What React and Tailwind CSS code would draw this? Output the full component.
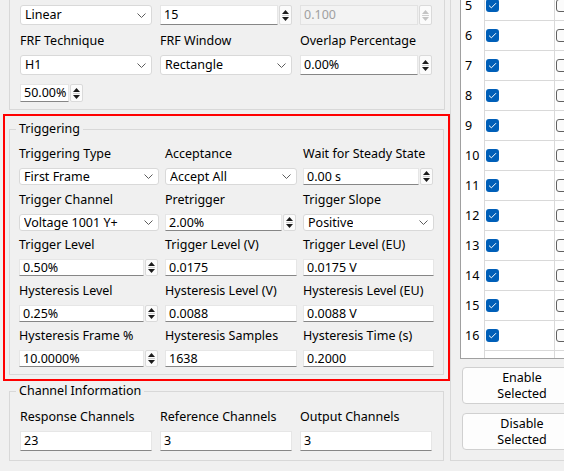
import React from 'react';

// small down chevron used by the combo boxes
const Chevron = () => (
  <svg width="9" height="5" viewBox="0 0 9 5" className="shrink-0">
    <path d="M0.5 0.5L4.5 4.5L8.5 0.5" fill="none" stroke="#5c5c5c" strokeWidth="1" />
  </svg>
);

const Combo = ({ value, className = 'h-[20px]' }) => (
  <div className={`${className} flex items-center justify-between bg-white border border-[#d9d9d9] rounded-[3px] pl-[4px] pr-[5px] overflow-hidden`}>
    <span className="truncate">{value}</span>
    <Chevron />
  </div>
);

const Field = ({ value, className = 'h-[20px]' }) => (
  <div className={`${className} flex items-center bg-white border border-[#e6e6e6] border-b-[#868686] pl-[3px] overflow-hidden whitespace-nowrap`}>
    {value}
  </div>
);

const DisabledField = ({ value, className = 'h-[20px]' }) => (
  <div className={`${className} flex items-center bg-[#f3f3f3] border border-[#e2e2e2] pl-[3px] text-[#a0a0a0] overflow-hidden whitespace-nowrap`}>
    {value}
  </div>
);

const Arrows = ({ disabled }) => {
  const c = disabled ? '#c4c4c4' : '#1b1b1b';
  return (
    <div className="w-[13px] shrink-0 flex flex-col items-center justify-center border border-[#dadada] rounded-[2px] bg-[#fbfbfb]">
      <svg width="7" height="4" viewBox="0 0 7 4">
        <path d="M0 4L3.5 0L7 4Z" fill={c} />
      </svg>
      <div className="w-[7px] h-px my-[1px] bg-[#cfcfcf]" />
      <svg width="7" height="4" viewBox="0 0 7 4">
        <path d="M0 0L3.5 4L7 0Z" fill={c} />
      </svg>
    </div>
  );
};

const Spin = ({ value, className = 'h-[20px]', disabled }) => (
  <div className={`${className} flex gap-[1px]`}>
    {disabled ? (
      <DisabledField value={value} className="flex-1 min-w-0" />
    ) : (
      <Field value={value} className="flex-1 min-w-0" />
    )}
    <Arrows disabled={disabled} />
  </div>
);

const Control = ({ item, className }) => {
  if (item.kind === 'combo') return <Combo value={item.value} className={className} />;
  if (item.kind === 'spin') return <Spin value={item.value} className={`${className} mr-[1px]`} />;
  return <Field value={item.value} className={className} />;
};

const triggerRows = [
  {
    h: 'h-[28px]',
    items: [
      { label: 'Triggering Type', kind: 'combo', value: 'First Frame' },
      { label: 'Acceptance', kind: 'combo', value: 'Accept All' },
      { label: 'Wait for Steady State', kind: 'spin', value: '0.00 s' },
    ],
  },
  {
    h: 'h-[29px]',
    items: [
      { label: 'Trigger Channel', kind: 'combo', value: 'Voltage 1001 Y+' },
      { label: 'Pretrigger', kind: 'spin', value: '2.00%' },
      { label: 'Trigger Slope', kind: 'combo', value: 'Positive' },
    ],
  },
  {
    h: 'h-[28px]',
    items: [
      { label: 'Trigger Level', kind: 'spin', value: '0.50%' },
      { label: 'Trigger Level (V)', kind: 'field', value: '0.0175' },
      { label: 'Trigger Level (EU)', kind: 'field', value: '0.0175 V' },
    ],
  },
  {
    h: 'h-[29px]',
    items: [
      { label: 'Hysteresis Level', kind: 'spin', value: '0.25%' },
      { label: 'Hysteresis Level (V)', kind: 'field', value: '0.0088' },
      { label: 'Hysteresis Level (EU)', kind: 'field', value: '0.0088 V' },
    ],
  },
  {
    h: 'h-[28px]',
    items: [
      { label: 'Hysteresis Frame %', kind: 'spin', value: '10.0000%' },
      { label: 'Hysteresis Samples', kind: 'field', value: '1638' },
      { label: 'Hysteresis Time (s)', kind: 'field', value: '0.2000' },
    ],
  },
];

// rows 5..16 are in view, 17 only peeks in under the last line
const channelRows = [5, 6, 7, 8, 9, 10, 11, 12, 13, 14, 15, 16, 17];

const CheckOn = () => (
  <div className="w-[13px] h-[13px] rounded-[3px] bg-[#005fb8] flex items-center justify-center">
    <svg width="9" height="7" viewBox="0 0 9 7">
      <path d="M1 3.6L3.4 5.8L8 1.2" fill="none" stroke="#ffffff" strokeWidth="1" />
    </svg>
  </div>
);

const CheckOff = () => (
  <div className="w-[13px] h-[13px] rounded-[3px] border border-[#616161] bg-[#fbfbfb]" />
);

export default function App() {
  return (
    <div className="w-[564px] h-[471px] overflow-hidden bg-[#f0f0f0] flex text-[12.5px] leading-[16px] text-black font-['Noto_Sans',sans-serif]">
      {/* settings column */}
      <div className="w-[450px] shrink-0 flex flex-col">
        {/* averaging / FRF group (top edge scrolled away) */}
        <div className="ml-[9px] w-[436px] border-x border-b border-[#d8d8d8] pl-[10px] pt-[5px] pb-[7px]">
          <div className="grid grid-cols-[132px_132px_132px] gap-x-[8px]">
            <Combo value="Linear" />
            <Spin value="15" />
            <Spin value="0.100" disabled />
            <div className="h-[30px] pt-[2px] flex items-center">FRF Technique</div>
            <div className="h-[30px] pt-[2px] flex items-center">FRF Window</div>
            <div className="h-[30px] pt-[2px] flex items-center">Overlap Percentage</div>
            <Combo value="H1" />
            <Combo value="Rectangle" />
            <Spin value="0.00%" />
          </div>
          <Spin value="50.00%" className="h-[18px] w-[63px] mt-[9px]" />
        </div>

        {/* highlighted triggering settings */}
        <div className="mt-[4px] ml-[3px] w-[447px] border-2 border-[#ff0000] pt-[5px] pl-[4px] pr-[4px] pb-[4px]">
          <fieldset className="w-[435px] border border-[#d8d8d8] pl-[9px] pt-[3px] pb-[7px]">
            <legend className="ml-[-3px] px-[3px]">Triggering</legend>
            {triggerRows.map((row, i) => (
              <div key={i} className="grid grid-cols-[140px_132px_131px] gap-x-[6px]">
                {row.items.map((item) => (
                  <div key={item.label} className={`${row.h} flex items-center whitespace-nowrap`}>
                    {item.label}
                  </div>
                ))}
                {row.items.map((item) => (
                  <Control key={item.label + '-c'} item={item} className="h-[17px]" />
                ))}
              </div>
            ))}
          </fieldset>
        </div>

        <fieldset className="mt-[2px] ml-[9px] w-[435px] border border-[#d8d8d8] pl-[10px] pt-[4px] pb-[9px]">
          <legend className="ml-[-4px] px-[3px]">Channel Information</legend>
          <div className="grid grid-cols-[132px_132px_132px] gap-x-[8px]">
            <div className="h-[28px] flex items-center">Response Channels</div>
            <div className="h-[28px] flex items-center">Reference Channels</div>
            <div className="h-[28px] flex items-center">Output Channels</div>
            <Field value="23" />
            <Field value="3" />
            <Field value="3" />
          </div>
        </fieldset>
      </div>

      {/* channel table and actions */}
      <div className="flex-1 h-[461px] border-l border-b border-[#d8d8d8] pl-[9px] flex flex-col">
        <div className="h-[359px] border-l border-b border-[#a0a0a0] bg-white overflow-hidden">
          <div className="mt-[-9px]">
            {channelRows.map((n) => (
              <div key={n} className="h-[30px] flex">
                <div className="w-[23px] shrink-0 pl-[4px] flex items-center">{n < 17 ? n : ''}</div>
                <div className="w-[70px] shrink-0 border-l border-b border-[#d9d9d9] pl-[1px] flex items-center">
                  {n < 17 && <CheckOn />}
                </div>
                <div className="w-[40px] shrink-0 border-l border-b border-[#d9d9d9] pl-[1px] flex items-center">
                  {n < 17 && <CheckOff />}
                </div>
              </div>
            ))}
          </div>
        </div>
        <button className="mt-[8px] ml-[2px] w-[120px] h-[37px] shrink-0 rounded-[4px] border border-[#d0d0d0] bg-[#fdfdfd] leading-[16px]">
          Enable
          <br />
          Selected
        </button>
        <button className="mt-[9px] ml-[2px] w-[120px] h-[37px] shrink-0 rounded-[4px] border border-[#d0d0d0] bg-[#fdfdfd] leading-[16px]">
          Disable
          <br />
          Selected
        </button>
      </div>
    </div>
  );
}
